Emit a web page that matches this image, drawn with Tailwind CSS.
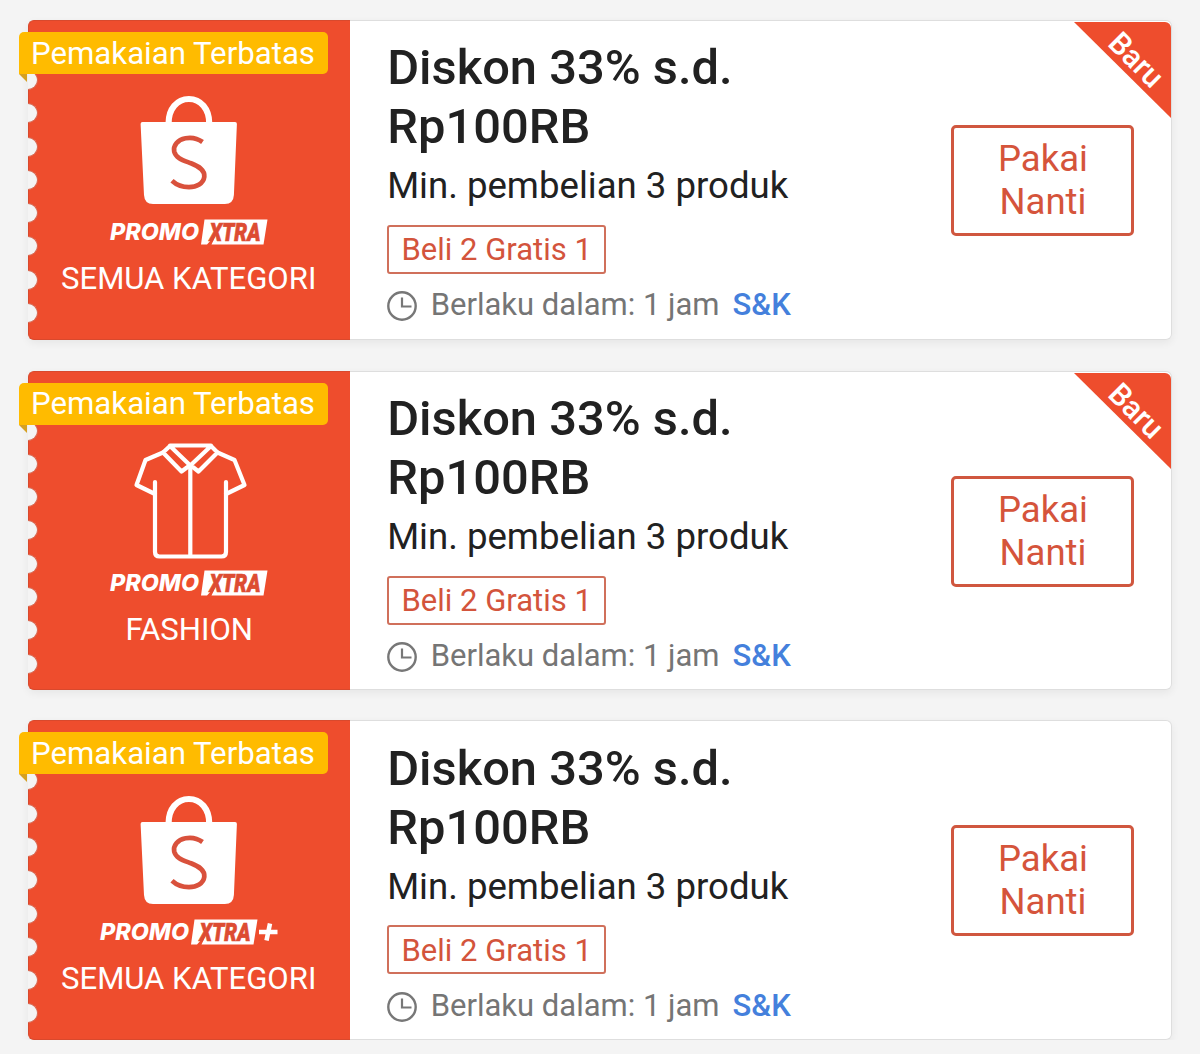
<!DOCTYPE html>
<html lang="id">
<head>
    <meta charset="UTF-8">
    <meta name="viewport" content="width=device-width, initial-scale=1.0">
    <title>Voucher Saya</title>
    <script src="https://cdn.jsdelivr.net/npm/@tailwindcss/browser@4"></script>
</head>
<body class="bg-[#f4f4f4] font-[Roboto,sans-serif] text-[#212121] overflow-hidden">

    <!-- Shared icons -->
    <svg class="hidden">
        <symbol id="icon-bag" viewBox="0 0 120 120">
            <path d="M39.600 38C39.600 24 48 14 59.900 14S80.200 24 80.200 38" fill="none" stroke="#fff" stroke-width="6.200"/>
            <path d="M13.500 37h92.500q2 0 1.900 2l-3 71q-.5 9-9 9H24q-8.500 0-9-9L11.600 39q-.1-2 1.900-2z" fill="#fff"/>
            <path d="M73.500 57C68.500 53.300 62 52.200 56.500 53.200C48.500 54.700 44 60.500 45.200 66.500C46.800 73.500 55 75.500 62 78.300C70 81.500 76 85 75.300 91.800C74.600 98.500 67.500 102.200 60 102.200C53.500 102.200 47.500 100 43 95.800" fill="none" stroke="#d9513c" stroke-width="4.700"/>
        </symbol>
        <symbol id="icon-shirt" viewBox="0 5.500 120 120" class="overflow-visible">
            <g fill="none" stroke="#fff" stroke-width="4.200" stroke-linejoin="round" stroke-linecap="round">
                <path d="M26 51.500V121.500q0 4.500 4.500 4.500H92.500q4.500 0 4.500-4.500V51.500"/>
                <path d="M26 63.500L7.500 54.500L16.500 29.500L34 22M97 63.500L115.500 54.500L105.500 29.500L88.500 22"/>
                <path d="M61.300 35L82 15.500L88.500 22L69.500 41L61.300 34.500L52.500 41L34 22L41 15.500L61.300 35M41 15H82"/>
                <path d="M61.300 35V125"/>
            </g>
        </symbol>
        <symbol id="promo-xtra" viewBox="0 0 160 28">
            <text x="1" y="22" font-family="Inter, sans-serif" font-weight="800" font-style="italic" font-size="23" textLength="89" lengthAdjust="spacingAndGlyphs" fill="#fff">PROMO</text>
            <path d="M95.500 1.500H158.500L154.500 26.500H102.500L107.500 16L98 26.500H92z" fill="#fff"/>
            <text x="100.500" y="23.300" font-family="Roboto, sans-serif" font-weight="900" font-style="italic" font-size="26" textLength="51" lengthAdjust="spacingAndGlyphs" fill="#dd4c32" stroke="#dd4c32" stroke-width="0.700">XTRA</text>
        </symbol>
        <symbol id="icon-clock" viewBox="0 0 30 30">
            <circle cx="15" cy="15" r="13.700" fill="none" stroke="#777" stroke-width="2.400"/>
            <path d="M15 6.500V15.500H24.500" fill="none" stroke="#777" stroke-width="2.200"/>
        </symbol>
    </svg>

    <main class="flex flex-col gap-[31px] pt-5 pl-7 pr-7">

        <!-- Voucher 1 -->
        <article class="relative flex h-[319.500px] rounded-md shadow-[0_3px_8px_rgba(0,0,0,0.06)]">
            <div class="relative flex w-[322.400px] shrink-0 flex-col items-center rounded-l-md border-y border-l border-[#d8492d] bg-[#ee4d2d]">
                <div class="absolute -left-px top-[49px] flex flex-col gap-[13.300px]">
                    <i class="h-5 w-2.5 rounded-r-full border-y border-r border-[#d8654e] bg-[#f4f4f4]"></i>
                    <i class="h-5 w-2.5 rounded-r-full border-y border-r border-[#d8654e] bg-[#f4f4f4]"></i>
                    <i class="h-5 w-2.5 rounded-r-full border-y border-r border-[#d8654e] bg-[#f4f4f4]"></i>
                    <i class="h-5 w-2.5 rounded-r-full border-y border-r border-[#d8654e] bg-[#f4f4f4]"></i>
                    <i class="h-5 w-2.5 rounded-r-full border-y border-r border-[#d8654e] bg-[#f4f4f4]"></i>
                    <i class="h-5 w-2.5 rounded-r-full border-y border-r border-[#d8654e] bg-[#f4f4f4]"></i>
                    <i class="h-5 w-2.5 rounded-r-full border-y border-r border-[#d8654e] bg-[#f4f4f4]"></i>
                    <i class="h-5 w-2.5 rounded-r-full border-y border-r border-[#d8654e] bg-[#f4f4f4]"></i>
                </div>
                <svg class="mt-[64px] mr-px h-[120px] w-[120px] overflow-visible"><use href="#icon-bag"/></svg>
                <svg class="mt-[13px] mr-0.5 h-7 w-40"><use href="#promo-xtra"/></svg>
                <p class="mt-[13px] mr-0.5 text-[31.100px] leading-10 whitespace-nowrap text-white">SEMUA KATEGORI</p>
            </div>
            <div class="flex flex-1 items-start justify-between rounded-r-md border-y border-r border-[#dedede] bg-white pl-[36.800px] pr-[37px]">
                <div class="flex flex-col items-start pt-[17px]">
                    <h2 class="w-[360px] text-[48.850px] leading-[59px] font-medium">Diskon 33% s.d. Rp100RB</h2>
                    <p class="mt-[8px] text-[36.600px] leading-[44px] whitespace-nowrap">Min. pembelian 3 produk</p>
                    <span class="mt-[17px] flex h-[49px] w-[219px] items-center justify-center rounded-[3px] border-2 border-[#d0705b] pt-[2px] text-[31px] whitespace-nowrap text-[#d3543c]">Beli 2 Gratis 1</span>
                    <div class="mt-[11px] flex items-center text-[31px] leading-10 whitespace-nowrap text-[#757575]">
                        <svg class="mt-[2px] mr-[13.500px] h-[30px] w-[30px]"><use href="#icon-clock"/></svg>
                        <span>Berlaku dalam: 1 jam</span>
                        <a class="ml-[13px] font-medium text-[#4480dc]">S&amp;K</a>
                    </div>
                </div>
                <button class="mt-[104px] h-[111px] w-[183px] rounded-[5px] border-3 border-[#d0573f] pr-8 pb-px pl-[33px] text-[36.500px] leading-[43px] text-[#d5543b]">Pakai Nanti</button>
            </div>
            <div class="absolute top-0.5 right-[1px] h-24 w-[97px] overflow-hidden rounded-tr-md">
                <svg class="h-24 w-[97px]"><path d="M0 0H97V96z" fill="#ee4d2d"/></svg>
                <span class="absolute top-[20px] left-[26px] w-[72px] rotate-45 text-center text-[30.500px] leading-9 font-medium text-white">Baru</span>
            </div>
            <div class="absolute top-3 -left-[9px] h-[42px] w-[309px] rounded-[5px] rounded-bl-none bg-[#ffbb00] pl-3 text-[31.200px] leading-[44px] whitespace-nowrap text-white"><span>Pemakaian Terbatas</span></div>
            <svg class="absolute top-[54px] -left-[9px] h-2 w-2"><path d="M0 0H8V8z" fill="#d5a022"/></svg>
        </article>

        <!-- Voucher 2 -->
        <article class="relative flex h-[319px] rounded-md shadow-[0_3px_8px_rgba(0,0,0,0.06)]">
            <div class="relative flex w-[322.400px] shrink-0 flex-col items-center rounded-l-md border-y border-l border-[#d8492d] bg-[#ee4d2d]">
                <div class="absolute -left-px top-[49px] flex flex-col gap-[13.300px]">
                    <i class="h-5 w-2.5 rounded-r-full border-y border-r border-[#d8654e] bg-[#f4f4f4]"></i>
                    <i class="h-5 w-2.5 rounded-r-full border-y border-r border-[#d8654e] bg-[#f4f4f4]"></i>
                    <i class="h-5 w-2.5 rounded-r-full border-y border-r border-[#d8654e] bg-[#f4f4f4]"></i>
                    <i class="h-5 w-2.5 rounded-r-full border-y border-r border-[#d8654e] bg-[#f4f4f4]"></i>
                    <i class="h-5 w-2.5 rounded-r-full border-y border-r border-[#d8654e] bg-[#f4f4f4]"></i>
                    <i class="h-5 w-2.5 rounded-r-full border-y border-r border-[#d8654e] bg-[#f4f4f4]"></i>
                    <i class="h-5 w-2.5 rounded-r-full border-y border-r border-[#d8654e] bg-[#f4f4f4]"></i>
                    <i class="h-5 w-2.5 rounded-r-full border-y border-r border-[#d8654e] bg-[#f4f4f4]"></i>
                </div>
                <svg class="mt-[64px] mr-px h-[120px] w-[120px] overflow-visible"><use href="#icon-shirt"/></svg>
                <svg class="mt-[13px] mr-0.5 h-7 w-40"><use href="#promo-xtra"/></svg>
                <p class="mt-[13px] mr-px text-[31.100px] leading-10 whitespace-nowrap text-white">FASHION</p>
            </div>
            <div class="flex flex-1 items-start justify-between rounded-r-md border-y border-r border-[#dedede] bg-white pl-[36.800px] pr-[37px]">
                <div class="flex flex-col items-start pt-[17px]">
                    <h2 class="w-[360px] text-[48.850px] leading-[59px] font-medium">Diskon 33% s.d. Rp100RB</h2>
                    <p class="mt-[8px] text-[36.600px] leading-[44px] whitespace-nowrap">Min. pembelian 3 produk</p>
                    <span class="mt-[17px] flex h-[49px] w-[219px] items-center justify-center rounded-[3px] border-2 border-[#d0705b] pt-[2px] text-[31px] whitespace-nowrap text-[#d3543c]">Beli 2 Gratis 1</span>
                    <div class="mt-[11px] flex items-center text-[31px] leading-10 whitespace-nowrap text-[#757575]">
                        <svg class="mt-[2px] mr-[13.500px] h-[30px] w-[30px]"><use href="#icon-clock"/></svg>
                        <span>Berlaku dalam: 1 jam</span>
                        <a class="ml-[13px] font-medium text-[#4480dc]">S&amp;K</a>
                    </div>
                </div>
                <button class="mt-[104px] h-[111px] w-[183px] rounded-[5px] border-3 border-[#d0573f] pr-8 pb-px pl-[33px] text-[36.500px] leading-[43px] text-[#d5543b]">Pakai Nanti</button>
            </div>
            <div class="absolute top-0.5 right-[1px] h-24 w-[97px] overflow-hidden rounded-tr-md">
                <svg class="h-24 w-[97px]"><path d="M0 0H97V96z" fill="#ee4d2d"/></svg>
                <span class="absolute top-[20px] left-[26px] w-[72px] rotate-45 text-center text-[30.500px] leading-9 font-medium text-white">Baru</span>
            </div>
            <div class="absolute top-3 -left-[9px] h-[42px] w-[309px] rounded-[5px] rounded-bl-none bg-[#ffbb00] pl-3 text-[31.200px] leading-[42px] whitespace-nowrap text-white"><span>Pemakaian Terbatas</span></div>
            <svg class="absolute top-[54px] -left-[9px] h-2 w-2"><path d="M0 0H8V8z" fill="#d5a022"/></svg>
        </article>

        <!-- Voucher 3 -->
        <article class="relative -mt-[0.200px] flex h-[319.500px] rounded-md shadow-[0_3px_8px_rgba(0,0,0,0.06)]">
            <div class="relative flex w-[322.400px] shrink-0 flex-col items-center rounded-l-md border-y border-l border-[#d8492d] bg-[#ee4d2d]">
                <div class="absolute -left-px top-[49px] flex flex-col gap-[13.300px]">
                    <i class="h-5 w-2.5 rounded-r-full border-y border-r border-[#d8654e] bg-[#f4f4f4]"></i>
                    <i class="h-5 w-2.5 rounded-r-full border-y border-r border-[#d8654e] bg-[#f4f4f4]"></i>
                    <i class="h-5 w-2.5 rounded-r-full border-y border-r border-[#d8654e] bg-[#f4f4f4]"></i>
                    <i class="h-5 w-2.5 rounded-r-full border-y border-r border-[#d8654e] bg-[#f4f4f4]"></i>
                    <i class="h-5 w-2.5 rounded-r-full border-y border-r border-[#d8654e] bg-[#f4f4f4]"></i>
                    <i class="h-5 w-2.5 rounded-r-full border-y border-r border-[#d8654e] bg-[#f4f4f4]"></i>
                    <i class="h-5 w-2.5 rounded-r-full border-y border-r border-[#d8654e] bg-[#f4f4f4]"></i>
                    <i class="h-5 w-2.5 rounded-r-full border-y border-r border-[#d8654e] bg-[#f4f4f4]"></i>
                </div>
                <svg class="mt-[64px] mr-px h-[120px] w-[120px] overflow-visible"><use href="#icon-bag"/></svg>
                <div class="mt-[13px] mr-0.5 flex">
                    <svg class="h-7 w-40"><use href="#promo-xtra"/></svg>
                    <svg class="h-7 w-[19px]"><path d="M0 14H18.500M11 5.500L7.500 22.500" fill="none" stroke="#fff" stroke-width="4.500"/></svg>
                </div>
                <p class="mt-[13px] mr-0.5 text-[31.100px] leading-10 whitespace-nowrap text-white">SEMUA KATEGORI</p>
            </div>
            <div class="flex flex-1 items-start justify-between rounded-r-md border-y border-r border-[#dedede] bg-white pl-[36.800px] pr-[37px]">
                <div class="flex flex-col items-start pt-[17.300px]">
                    <h2 class="w-[360px] text-[48.850px] leading-[59px] font-medium">Diskon 33% s.d. Rp100RB</h2>
                    <p class="mt-[8px] text-[36.600px] leading-[44px] whitespace-nowrap">Min. pembelian 3 produk</p>
                    <span class="mt-[16.700px] flex h-[49px] w-[219px] items-center justify-center rounded-[3px] border-2 border-[#d0705b] pt-[2px] text-[31px] whitespace-nowrap text-[#d3543c]">Beli 2 Gratis 1</span>
                    <div class="mt-[11.300px] flex items-center text-[31px] leading-10 whitespace-nowrap text-[#757575]">
                        <svg class="mt-[2px] mr-[13.500px] h-[30px] w-[30px]"><use href="#icon-clock"/></svg>
                        <span>Berlaku dalam: 1 jam</span>
                        <a class="ml-[13px] font-medium text-[#4480dc]">S&amp;K</a>
                    </div>
                </div>
                <button class="mt-[104px] h-[111px] w-[183px] rounded-[5px] border-3 border-[#d0573f] pr-8 pb-px pl-[33px] text-[36.500px] leading-[43px] text-[#d5543b]">Pakai Nanti</button>
            </div>
            <div class="absolute top-3 -left-[9px] h-[42px] w-[309px] rounded-[5px] rounded-bl-none bg-[#ffbb00] pl-3 text-[31.200px] leading-[44px] whitespace-nowrap text-white"><span>Pemakaian Terbatas</span></div>
            <svg class="absolute top-[54px] -left-[9px] h-2 w-2"><path d="M0 0H8V8z" fill="#d5a022"/></svg>
        </article>

    </main>
</body>
</html>
